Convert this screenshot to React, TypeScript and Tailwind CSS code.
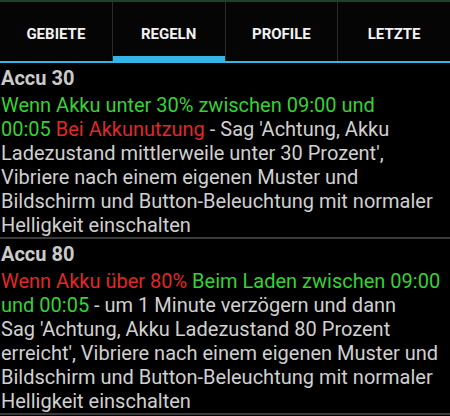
import React from "react";

const tabs = ["GEBIETE", "REGELN", "PROFILE", "LETZTE"];

const G = ({ children }: { children: React.ReactNode }) => (
  <span className="text-[#35d235]">{children}</span>
);
const R = ({ children }: { children: React.ReactNode }) => (
  <span className="text-[#e02828]">{children}</span>
);

export default function App() {
  return (
    <div
      className="w-[450px] h-[416px] bg-black overflow-hidden"
      style={{ fontFamily: "Roboto, 'Liberation Sans', sans-serif" }}
    >
      <div className="h-[2px] bg-[#16432a]" />
      <div className="relative flex h-[61px] bg-[#050505]">
        {tabs.map((t, i) => (
          <div
            key={t}
            className={`relative flex-1 flex items-center justify-center text-[15px] font-bold text-[#f2f2f2] pt-[4px] ${
              i < 3 ? "border-r border-[#2a2a2a]" : ""
            }`}
          >
            {t}
            {i === 1 && (
              <div className="absolute left-0 right-0 bottom-0 h-[7px] bg-[#33b5e5]" />
            )}
          </div>
        ))}
        <div className="absolute left-0 right-0 bottom-0 h-[2px] bg-[#33b5e5]" />
      </div>
      <Item
        title="Accu 30"
        lines={[
          <G>Wenn Akku unter 30% zwischen 09:00 und</G>,
          <>
            <G>00:05</G> <R>Bei Akkunutzung</R> - Sag 'Achtung, Akku
          </>,
          <>Ladezustand mittlerweile unter 30 Prozent',</>,
          <>Vibriere nach einem eigenen Muster und</>,
          <>Bildschirm und Button-Beleuchtung mit normaler</>,
          <>Helligkeit einschalten</>,
        ]}
      />
      <Item
        title="Accu 80"
        lines={[
          <>
            <R>Wenn Akku über 80%</R> <G>Beim Laden zwischen 09:00</G>
          </>,
          <>
            <G>und 00:05</G> - um 1 Minute verzögern und dann
          </>,
          <>Sag 'Achtung, Akku Ladezustand 80 Prozent</>,
          <>erreicht', Vibriere nach einem eigenen Muster und</>,
          <>Bildschirm und Button-Beleuchtung mit normaler</>,
          <>Helligkeit einschalten</>,
        ]}
      />
    </div>
  );
}

function Item({ title, lines }: { title: string; lines: React.ReactNode[] }) {
  return (
    <div className="border-b-2 border-[#3a3a3a]">
      <div className="pt-[2px] h-[28px] leading-[26px] text-[20px] font-bold text-[#cacaca] pl-[1px]">
        {title}
      </div>
      <div className="mt-[2px] text-[20px] leading-[24px] text-[#d0d0d0] pl-[1px]">
        {lines.map((l, i) => (
          <div key={i} className="whitespace-nowrap">
            {l}
          </div>
        ))}
      </div>
    </div>
  );
}
